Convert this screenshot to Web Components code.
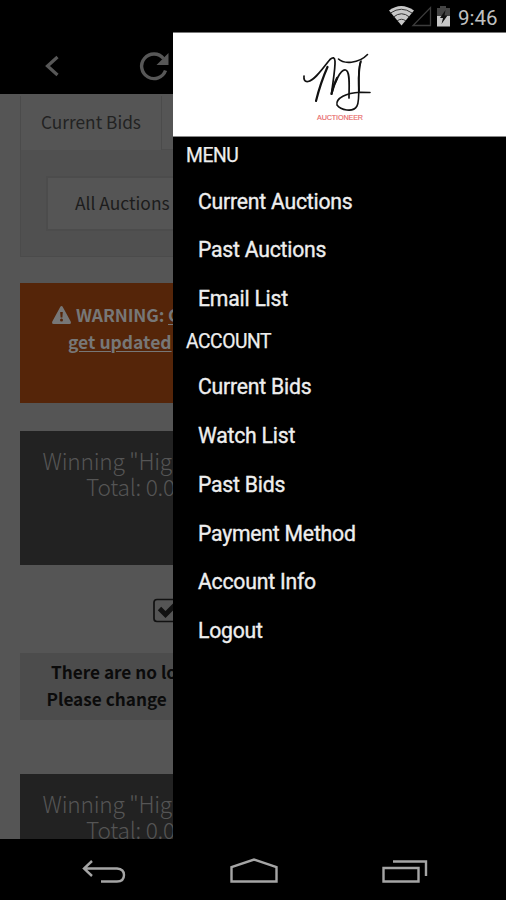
<!DOCTYPE html>
<html lang="en"><head><meta charset="utf-8"><title>MJ Auctioneer</title>
<style>html,body{margin:0;background:#000}body{width:506px;height:900px;overflow:hidden}</style></head>
<body><auction-app></auction-app>
<script>
const define=(name,html)=>{
  const t=document.createElement('template');t.innerHTML=html;
  customElements.define(name,class extends HTMLElement{
    constructor(){super();this.attachShadow({mode:'open'}).append(t.content.cloneNode(true));}
  });
};
define('status-bar',`<style>
:host{display:flex;height:32px;justify-content:flex-end;background:#000;color:#c0c0c0;font:20.500px/36px Roboto,sans-serif}
svg{display:block;flex:none}span{width:48px;white-space:nowrap}
</style><svg width="70" height="32" viewBox="388 0 70 32"><path d="M389 10.500Q401 1.500 414 10.500L401.500 25.500Z" fill="#c8c8c8"/><path d="M390.500 13Q401.500 5.500 412 13M393.500 17Q401.500 10.500 409.500 17M397 21Q401.500 17.500 406 21" stroke="#333" stroke-width="1" fill="none"/><path d="M430.500 7.500V25.500H413Z" fill="none" stroke="#3c3c3c" stroke-width="1.300"/><path d="M437 8h3V6h6v2h4v8h-13Z" fill="#444"/><path d="M437 16h13v10.500h-13Z" fill="#c8c8c8"/><path d="M445.500 10L440 18h3l-1.500 6 6-8.500h-3Z" fill="#111"/></svg><span>9:46</span>`);
define('app-bar',`<style>:host{display:block;height:62px;background:#000}svg{display:block}</style>
<svg width="173" height="62" viewBox="0 32 173 62" fill="none" stroke="#575757"><path d="M57.500 57L47.500 66L57.500 75" stroke-width="3.200"/><path d="M165.500 70.500A12.300 12.300 0 1 1 163.500 58.500" stroke-width="3.400"/><path d="M168.500 53V65H156.500Z" fill="#575757" stroke="none"/></svg>`);
define('tab-panel',`<style>
:host{display:block;padding:2px 0 0 20px}
.tabs{display:flex;height:54px;font-size:17.300px;line-height:52px;color:#222;border-left:1px solid #4b4b4b;box-sizing:border-box}
.tab{width:141px;box-sizing:border-box;padding-left:20px;border-right:1px solid #4b4b4b;white-space:nowrap}
.rest{flex:1;border-bottom:1px solid #4d4d4d;box-sizing:border-box}
.body{height:107px;box-sizing:border-box;background:#505050;border:solid #4b4b4b;border-width:0 0 1px 1px;padding:26px 0 0 25px}
.select{height:55px;box-sizing:border-box;background:#555;border:2px solid #4c4c4c;border-right:0;padding-left:27px;font-size:17.400px;line-height:49px;white-space:nowrap;color:#1c1c1c}
</style><div class="tabs"><div class="tab">Current Bids</div><div class="rest"></div></div><div class="body"><div class="select">All Auctions</div></div>`);
define('warning-box',`<style>
:host{display:block;box-sizing:border-box;height:120px;margin:26px 0 0 20px;padding-top:18px;background:#552509;color:#777;font-weight:700;font-size:17.500px;line-height:27px;white-space:nowrap}
.l{display:flex;align-items:center}.a{padding-left:32px;letter-spacing:-.15px}.b{padding-left:48px}svg{margin-right:5px;flex:none}u{text-decoration-thickness:1px;text-underline-offset:2px}
</style><div class="l a"><svg width="19" height="18" viewBox="0 0 19 18"><path d="M9.500 0Q10.300 0 10.800 1L18.700 15.500Q19.500 18 17.500 18H1.500Q-.5 18 .3 15.500L8.200 1Q8.700 0 9.500 0Z" fill="#777"/><path d="M8.200 6h2.600l-.4 5.500H8.600Z" fill="#552509"/><circle cx="9.500" cy="14" r="1.500" fill="#552509"/></svg><span>WARNING: <u>C</u></span></div><div class="l b"><u>get updated</u></div>`);
define('total-box',`<style>
:host{display:block;box-sizing:border-box;height:134px;margin-left:20px;padding-top:17px;background:#222;color:#555;font-weight:300;font-size:22.700px;letter-spacing:-.25px;line-height:26px;white-space:nowrap}
.a{padding-left:22.500px}.b{padding-left:66px}</style><div class="a"><slot name="title"></slot></div><div class="b"><slot></slot></div>`);
define('check-row',`<style>:host{display:block;height:88px;padding-left:153px}svg{display:block}</style>
<svg width="20" height="88" viewBox="153 565 20 88"><rect x="154" y="599.500" width="24" height="22" rx="3" fill="none" stroke="#111" stroke-width="1.700"/><path d="M159.500 608.500L165.500 614.500L176 604" fill="none" stroke="#111" stroke-width="4.800"/></svg>`);
define('empty-note',`<style>
:host{display:block;box-sizing:border-box;height:67px;margin:0 0 54px 20px;padding-top:5px;background:#4c4c4c;color:#0b0b0b;font-weight:700;font-size:17.200px;line-height:27px;white-space:nowrap}
.a{padding-left:31px}.b{padding-left:26.500px}</style><div class="a">There are no lo</div><div class="b">Please change</div>`);
define('menu-logo',`<style>:host{display:block;box-sizing:border-box;height:105px;background:#fff;border-top:1px solid #777;border-bottom:1px solid #888}
svg{display:block;margin:auto}</style><svg width="120" height="103" viewBox="280 33 120 103" fill="none" stroke="#111" stroke-linecap="round" stroke-linejoin="round"><g transform="translate(-3.500 0)"><path d="M307.500 76C307 80 308.500 82 311.500 81.500C319 80 327 67 333.500 59.500Q338 55.500 338.500 61C339 68 336 84 335 94C338 83 344 69 349 70C354 71 352.500 86 352.500 98" stroke-width="1.700"/><path d="M331 67C327 76 323 87 319.500 101M335 94Q336.500 85 340.500 78" stroke-width="2.200"/><path d="M342 59C347 64 362 64 371 54.500" stroke-width="1.600"/><path d="M364.500 61C359 75 365 97 360.500 106C356.500 113 344 110 340.500 105C339 98 350 93 363.500 92.300L373.500 92.500" stroke-width="1.600"/><path d="M364 62C361.500 72 362.500 82 362.500 91" stroke-width="1.900"/></g><text x="317" y="120" font-family="Liberation Sans,sans-serif" font-size="7.200" textLength="46" fill="#e96a6a" stroke="#e96a6a" stroke-width=".15">AUCTIONEER</text></svg>`);
define('menu-section',`<style>:host{display:block}h2{margin:0;padding-left:13px;height:39.500px;font:400 19.300px/38.500px Roboto,sans-serif;letter-spacing:-.45px;color:#eee;-webkit-text-stroke:.25px #eee}</style><h2><slot name="title"></slot></h2><slot></slot>`);
define('menu-item',`<style>:host{display:block;height:48.750px;padding-left:25px;font:400 21.200px/49.500px Roboto,sans-serif;letter-spacing:-.22px;color:#eee;-webkit-text-stroke:.35px #eee;white-space:nowrap}</style><slot></slot>`);
define('nav-bar',`<style>:host{display:block;height:61px;background:#000}svg{display:block}</style>
<svg width="506" height="61" viewBox="0 839 506 61" fill="none" stroke="#a5a5a5" stroke-width="2.400"><path d="M92 861L84 868.500L92 876M84 868.500H117Q124 869 124 875Q124 881.500 117 881.500H101"/><path d="M231.500 881.500V867L254 859.500L276.500 867V881.500Z"/><path d="M383.500 868H418.500V881.500H383.500ZM393 861.500H426V876"/></svg>`);
define('auction-app',`<style>
:host{display:block;width:506px;height:900px;background:#000}
.main{display:grid;grid-template-columns:173px 333px;height:807px}
.left{overflow:hidden;height:807px}
.page{height:745px;overflow:hidden;background:#555;font-family:"Noto Sans CJK SC",sans-serif}
.first{margin-top:28px}
</style><status-bar></status-bar><div class="main"><div class="left"><app-bar></app-bar><div class="page"><tab-panel></tab-panel><warning-box></warning-box><total-box class="first"><span slot="title">Winning "Hig</span>Total: 0.0</total-box><check-row></check-row><empty-note></empty-note><total-box><span slot="title">Winning "Hig</span>Total: 0.0</total-box></div></div>
<nav><menu-logo></menu-logo><menu-section><span slot="title">MENU</span><menu-item>Current Auctions</menu-item><menu-item>Past Auctions</menu-item><menu-item>Email List</menu-item></menu-section><menu-section><span slot="title">ACCOUNT</span><menu-item>Current Bids</menu-item><menu-item>Watch List</menu-item><menu-item>Past Bids</menu-item><menu-item>Payment Method</menu-item><menu-item>Account Info</menu-item><menu-item>Logout</menu-item></menu-section></nav></div><nav-bar></nav-bar>`);
</script></body></html>
